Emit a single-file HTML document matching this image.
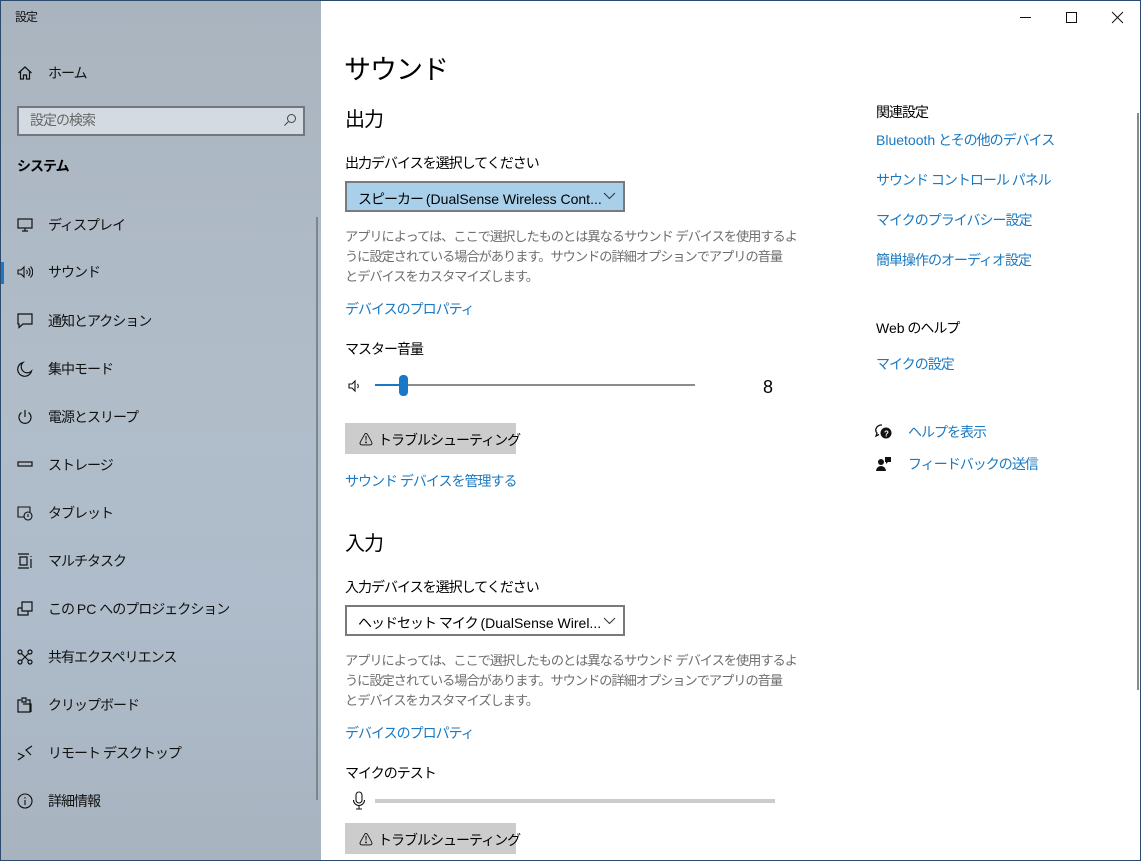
<!DOCTYPE html>
<html><head><meta charset="utf-8"><style>
*{margin:0;padding:0;box-sizing:border-box}
body{width:1141px;height:861px;overflow:hidden;font-family:"Liberation Sans","Noto Sans CJK JP",sans-serif;background:#fff;position:relative;color:#000;letter-spacing:-1px}
.l{letter-spacing:0}
.side{position:absolute;left:0;top:0;width:321px;height:861px;background:linear-gradient(180deg,#aab4bf 0%,#b0bdc9 45%,#aebccb 70%,#a8b3bf 100%)}
.t{position:absolute;white-space:nowrap;line-height:1}
.frame{position:absolute;inset:0;border:1px solid #2b4a6e;pointer-events:none}
.nav{position:absolute;left:48px;font-size:14px;color:#111}
.ic{position:absolute;left:17px}
.lnk{color:#1a79c2;font-size:14px}
.desc{color:#6e6e6e;font-size:13.2px;line-height:20px;position:absolute;left:345px;white-space:nowrap}
.dd{position:absolute;left:345px;width:280px;height:31px;border:2px solid #7a7a7a;font-size:14px;padding:6px 0 0 11px;white-space:nowrap;overflow:hidden}
.btn{position:absolute;left:345px;width:171px;height:31px;background:#cccccc;font-size:14px;padding:7px 0 0 14px;white-space:nowrap}
.btn b{font-weight:normal;margin-right:6px}
</style></head><body>
<div class="side">
<div class="t" style="left:15px;top:11px;font-size:12px;color:#111">設定</div>
<svg class="ic" style="top:65px" width="16" height="16" viewBox="0 0 16 16" fill="none" stroke="#111" stroke-width="1.2"><path d="M1.5 8L8 2l6.5 6M3.5 6.5V14h3v-4h3v4h3V6.5"/></svg>
<div class="nav t" style="top:66px">ホーム</div>
<div style="position:absolute;left:17px;top:106px;width:288px;height:30px;border:2px solid #6f7780;background:#d3dae1"></div>
<div class="t" style="left:30px;top:113px;font-size:14px;color:#666">設定の検索</div>
<svg style="position:absolute;left:283px;top:113px" width="14" height="14" viewBox="0 0 14 14" fill="none" stroke="#444" stroke-width="1"><circle cx="8.5" cy="5.5" r="4"/><path d="M5.5 8.5L1.5 12.5"/></svg>
<div class="t" style="left:17px;top:159px;font-size:14px;font-weight:bold">システム</div>
<div style="position:absolute;left:316px;top:217px;width:2px;height:583px;background:#7d858d"></div>
<div style="position:absolute;left:0;top:262px;width:4px;height:22px;background:#1a78c6"></div>

<svg class="ic" style="top:218px" width="16" height="14" viewBox="0 0 16 14" fill="none" stroke="#111" stroke-width="1.2"><rect x="1" y="1" width="14" height="9"/><path d="M8 10v3M5 13h6"/></svg>
<div class="nav t" style="top:218px">ディスプレイ</div>
<svg class="ic" style="top:265px" width="16" height="14" viewBox="0 0 16 14" fill="none" stroke="#111" stroke-width="1.1"><path d="M1 5h3l3-3v10L4 9H1z M9.5 5a3 3 0 010 4M11.5 3a6 6 0 010 8M13.5 1.5a8 8 0 010 11"/></svg>
<div class="nav t" style="top:265px">サウンド</div>
<svg class="ic" style="top:313px" width="16" height="16" viewBox="0 0 16 16" fill="none" stroke="#111" stroke-width="1.2"><path d="M1 1h14v10H6l-4 3.5V11H1z"/></svg>
<div class="nav t" style="top:314px">通知とアクション</div>
<svg class="ic" style="top:361px" width="16" height="16" viewBox="0 0 16 16" fill="none" stroke="#111" stroke-width="1.2"><path d="M6 1.5a7 7 0 108.5 8.5A6 6 0 016 1.5z"/></svg>
<div class="nav t" style="top:362px">集中モード</div>
<svg class="ic" style="top:409px" width="16" height="16" viewBox="0 0 16 16" fill="none" stroke="#111" stroke-width="1.2"><path d="M8 1v7M4.5 3.5a6 6 0 107 0"/></svg>
<div class="nav t" style="top:410px">電源とスリープ</div>
<svg class="ic" style="top:459px" width="16" height="10" viewBox="0 0 16 10" fill="none" stroke="#111" stroke-width="1.2"><rect x="1" y="3" width="14" height="4"/></svg>
<div class="nav t" style="top:458px">ストレージ</div>
<svg class="ic" style="top:505px" width="16" height="16" viewBox="0 0 16 16" fill="none" stroke="#111" stroke-width="1.1"><path d="M7 12H1V2h12v5"/><circle cx="11" cy="11" r="4"/><path d="M11 9v3"/></svg>
<div class="nav t" style="top:506px">タブレット</div>
<svg class="ic" style="top:553px" width="16" height="16" viewBox="0 0 16 16" fill="none" stroke="#111" stroke-width="1.2"><path d="M1 1h11M1 15h11M3 4h7v8H3zM14 3v1M14 6v9"/></svg>
<div class="nav t" style="top:554px">マルチタスク</div>
<svg class="ic" style="top:601px" width="16" height="16" viewBox="0 0 16 16" fill="none" stroke="#111" stroke-width="1.2"><path d="M5 1h10v9H5zM1 7h4M1 7v7h10v-4M1 14h10"/></svg>
<div class="nav t" style="top:602px">この <span class="l">PC</span> へのプロジェクション</div>
<svg class="ic" style="top:649px" width="16" height="16" viewBox="0 0 16 16" fill="none" stroke="#111" stroke-width="1.2"><circle cx="3" cy="3" r="2"/><circle cx="13" cy="3" r="2"/><circle cx="3" cy="13" r="2"/><circle cx="13" cy="13" r="2"/><path d="M4.5 4.5l7 7M11.5 4.5l-7 7"/></svg>
<div class="nav t" style="top:650px">共有エクスペリエンス</div>
<svg class="ic" style="top:697px" width="16" height="16" viewBox="0 0 16 16" fill="none" stroke="#111" stroke-width="1.2"><path d="M4 3H1v12h12V3h-3M5 1h4v4H5zM6 7h8v8"/></svg>
<div class="nav t" style="top:698px">クリップボード</div>
<svg class="ic" style="top:745px" width="16" height="16" viewBox="0 0 16 16" fill="none" stroke="#111" stroke-width="1.2"><path d="M1 8l6 3-6 4M15 1L9 5l5 5"/></svg>
<div class="nav t" style="top:746px">リモート デスクトップ</div>
<svg class="ic" style="top:793px" width="16" height="16" viewBox="0 0 16 16" fill="none" stroke="#111" stroke-width="1.1"><circle cx="8" cy="8" r="7"/><path d="M8 7v5M8 4v1.5"/></svg>
<div class="nav t" style="top:794px">詳細情報</div>
</div>

<svg style="position:absolute;left:1018px;top:10px" width="110" height="16" viewBox="0 0 110 16" fill="none" stroke="#111" stroke-width="1"><path d="M2 7.5h11"/><rect x="48.5" y="2.5" width="10" height="10"/><path d="M94 2l11 11M105 2L94 13"/></svg>
<div style="position:absolute;left:1137px;top:113px;width:2px;height:577px;background:#8a8a8a"></div>

<div class="t" style="left:344px;top:57px;font-size:27px">サウンド</div>
<div class="t" style="left:345px;top:110px;font-size:20px">出力</div>
<div class="t" style="left:345px;top:156px;font-size:14px">出力デバイスを選択してください</div>
<div class="dd" style="top:181px;background:#a8d0ea">スピーカー <span class="l">(DualSense Wireless Cont...</span></div>
<svg style="position:absolute;left:603px;top:192px" width="13" height="8" viewBox="0 0 13 8" fill="none" stroke="#333" stroke-width="1"><path d="M1 1l5.5 5.5L12 1"/></svg>
<div class="desc" style="top:227px">アプリによっては、ここで選択したものとは異なるサウンド デバイスを使用するよ<br>うに設定されている場合があります。サウンドの詳細オプションでアプリの音量<br>とデバイスをカスタマイズします。</div>
<div class="t lnk" style="left:345px;top:302px">デバイスのプロパティ</div>
<div class="t" style="left:345px;top:342px;font-size:14px">マスター音量</div>
<svg style="position:absolute;left:348px;top:379px" width="14" height="14" viewBox="0 0 14 14" fill="none" stroke="#111" stroke-width="1.1"><path d="M1 5h3l3-3v10L4 9H1zM9.5 5a3 3 0 010 4"/></svg>
<div style="position:absolute;left:375px;top:384px;width:320px;height:2px;background:#8c8c8c"></div>
<div style="position:absolute;left:375px;top:384px;width:27px;height:2px;background:#1a78c6"></div>
<div style="position:absolute;left:399px;top:375px;width:9px;height:21px;border-radius:4px;background:#1a78c6"></div>
<div class="t" style="left:763px;top:378px;font-size:18px">8</div>
<div class="btn" style="top:423px"><b>⚠</b>トラブルシューティング</div>
<div class="t lnk" style="left:345px;top:474px">サウンド デバイスを管理する</div>

<div class="t" style="left:345px;top:534px;font-size:20px">入力</div>
<div class="t" style="left:345px;top:580px;font-size:14px">入力デバイスを選択してください</div>
<div class="dd" style="top:605px;background:#fff">ヘッドセット マイク <span class="l">(DualSense Wirel...</span></div>
<svg style="position:absolute;left:603px;top:617px" width="13" height="8" viewBox="0 0 13 8" fill="none" stroke="#333" stroke-width="1"><path d="M1 1l5.5 5.5L12 1"/></svg>
<div class="desc" style="top:651px">アプリによっては、ここで選択したものとは異なるサウンド デバイスを使用するよ<br>うに設定されている場合があります。サウンドの詳細オプションでアプリの音量<br>とデバイスをカスタマイズします。</div>
<div class="t lnk" style="left:345px;top:726px">デバイスのプロパティ</div>
<div class="t" style="left:345px;top:766px;font-size:14px">マイクのテスト</div>
<svg style="position:absolute;left:352px;top:791px" width="14" height="20" viewBox="0 0 14 20" fill="none" stroke="#111" stroke-width="1.1"><rect x="4" y="1" width="6" height="11" rx="3"/><path d="M1.5 9a5.5 5.5 0 0011 0M7 14.5V18M4 18h6"/></svg>
<div style="position:absolute;left:375px;top:799px;width:400px;height:4px;background:#cccccc"></div>
<div class="btn" style="top:823px"><b>⚠</b>トラブルシューティング</div>

<div class="t" style="left:876px;top:105px;font-size:14px">関連設定</div>
<div class="t lnk" style="left:876px;top:133px"><span class="l">Bluetooth</span> とその他のデバイス</div>
<div class="t lnk" style="left:876px;top:173px">サウンド コントロール パネル</div>
<div class="t lnk" style="left:876px;top:213px">マイクのプライバシー設定</div>
<div class="t lnk" style="left:876px;top:253px">簡単操作のオーディオ設定</div>
<div class="t" style="left:876px;top:321px;font-size:14px"><span class="l">Web</span> のヘルプ</div>
<div class="t lnk" style="left:876px;top:357px">マイクの設定</div>
<svg style="position:absolute;left:875px;top:424px" width="18" height="16" viewBox="0 0 18 16"><path d="M7 1a6 5 0 00-5 8l-1 3 3-1.5" fill="none" stroke="#111" stroke-width="1.3"/><circle cx="11" cy="9" r="5.5" fill="#111"/><text x="11" y="12.5" font-size="8" fill="#fff" text-anchor="middle" font-family="Liberation Sans" font-weight="bold">?</text></svg>
<div class="t lnk" style="left:908px;top:425px">ヘルプを表示</div>
<svg style="position:absolute;left:876px;top:456px" width="16" height="16" viewBox="0 0 16 16" fill="#111"><circle cx="5" cy="6" r="3"/><path d="M0 15a5 5 0 0110 0z"/><path d="M9 1h6v5h-3l-2 2V6H9z"/></svg>
<div class="t lnk" style="left:908px;top:457px">フィードバックの送信</div>

<div class="frame"></div>
</body></html>
